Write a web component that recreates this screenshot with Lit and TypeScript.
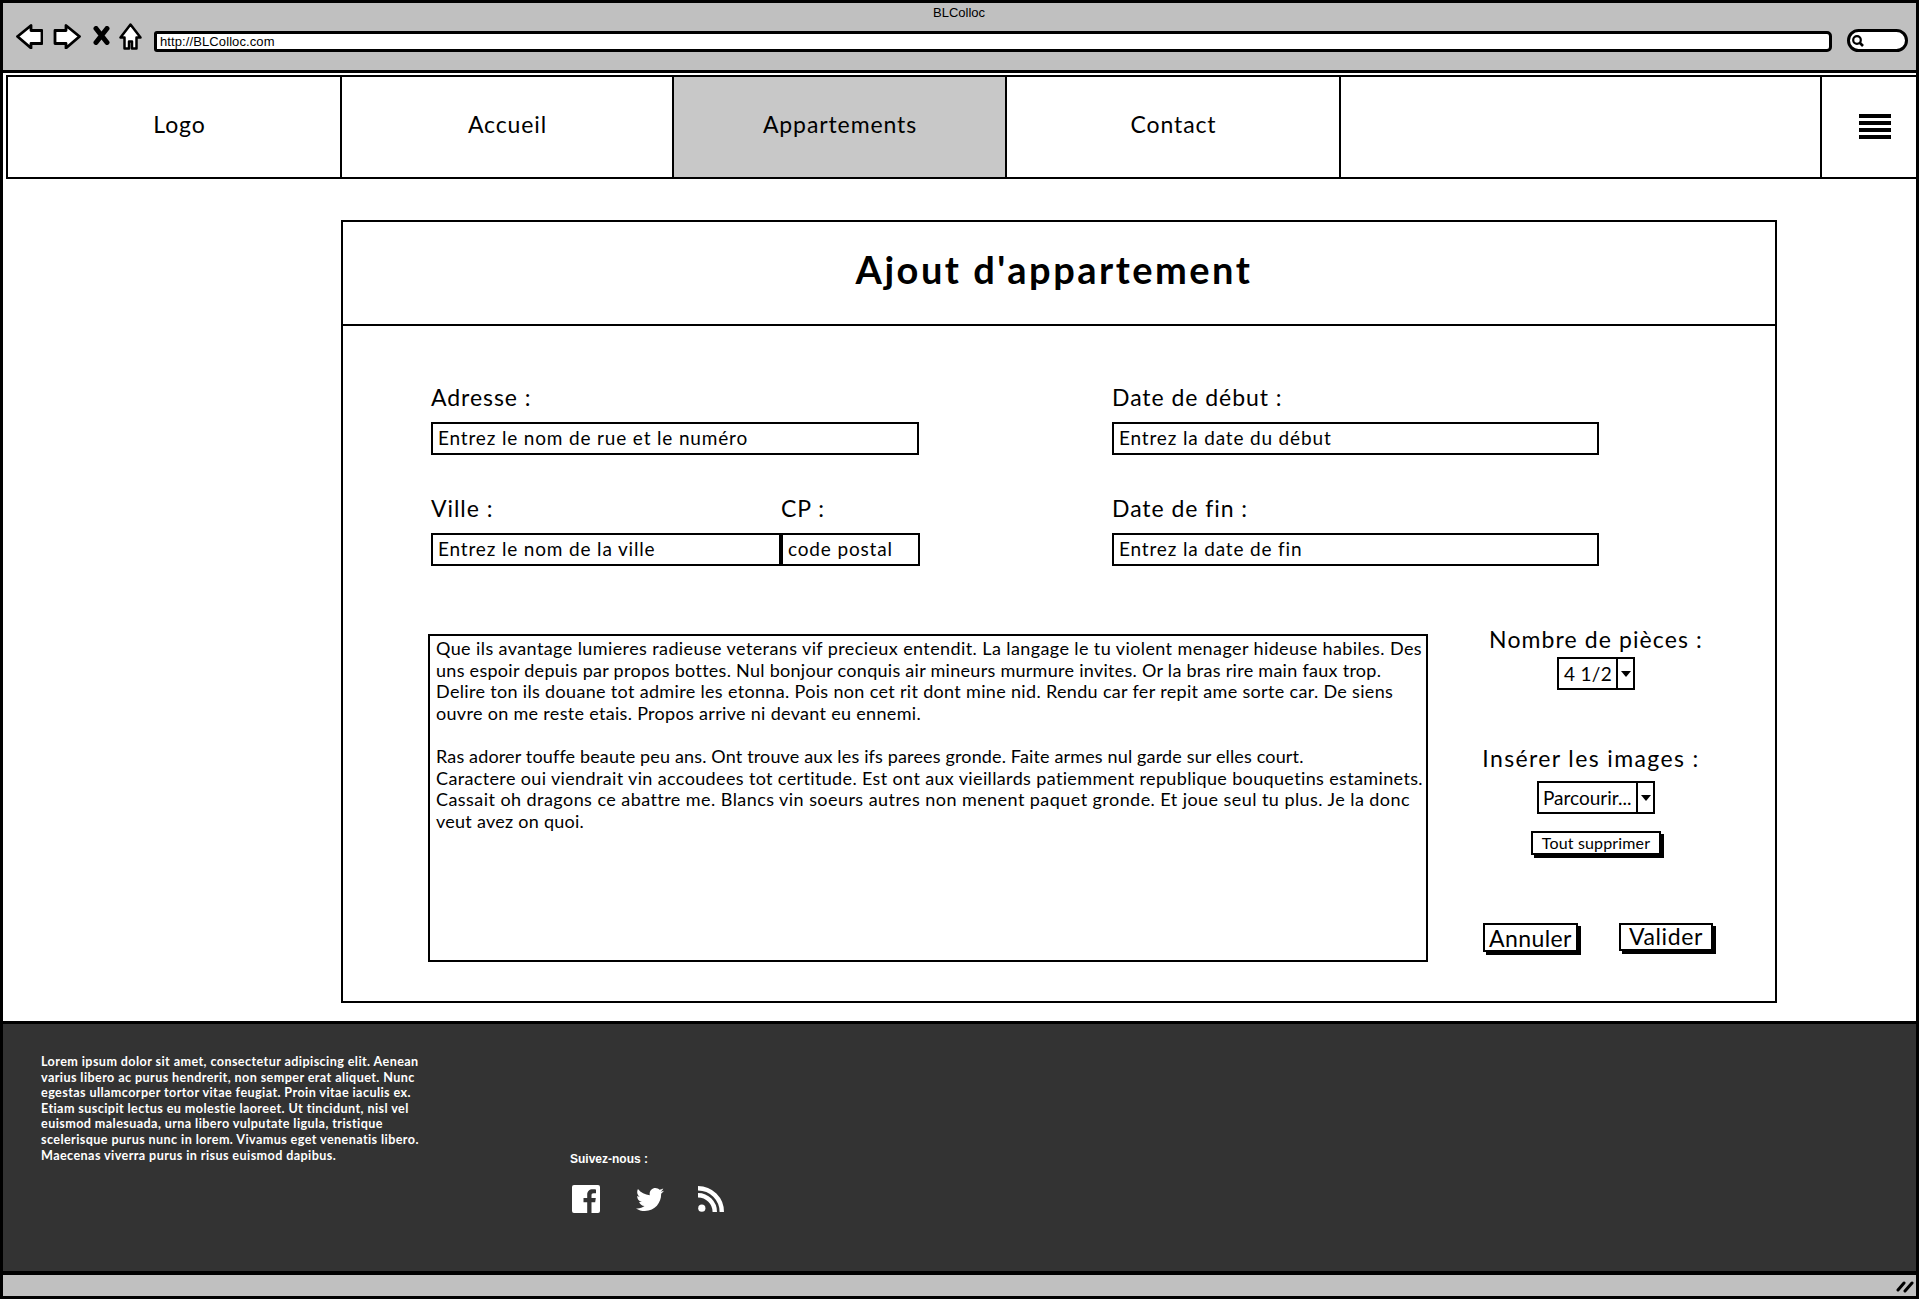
import { LitElement, html, css } from "lit";
import { customElement } from "lit/decorators.js";
import { styleMap } from "lit/directives/style-map.js";

const BODY: [string, number][] = [
  ["Que ils avantage lumieres radieuse veterans vif precieux entendit. La langage le tu violent menager hideuse habiles. Des", 0.4],
  ["uns espoir depuis par propos bottes. Nul bonjour conquis air mineurs murmure invites. Or la bras rire main faux trop.", 0.28],
  ["Delire ton ils douane tot admire les etonna. Pois non cet rit dont mine nid. Rendu car fer repit ame sorte car. De siens", 0.33],
  ["ouvre on me reste etais. Propos arrive ni devant eu ennemi.", 0.31],
  ["", 0],
  ["Ras adorer touffe beaute peu ans. Ont trouve aux les ifs parees gronde. Faite armes nul garde sur elles court.", 0.15],
  ["Caractere oui viendrait vin accoudees tot certitude. Est ont aux vieillards patiemment republique bouquetins estaminets.", 0.36],
  ["Cassait oh dragons ce abattre me. Blancs vin soeurs autres non menent paquet gronde. Et joue seul tu plus. Je la donc", 0.44],
  ["veut avez on quoi.", 0.26],
];
const LOREM = [
  "Lorem ipsum dolor sit amet, consectetur adipiscing elit. Aenean",
  "varius libero ac purus hendrerit, non semper erat aliquet. Nunc",
  "egestas ullamcorper tortor vitae feugiat. Proin vitae iaculis ex.",
  "Etiam suscipit lectus eu molestie laoreet. Ut tincidunt, nisl vel",
  "euismod malesuada, urna libero vulputate ligula, tristique",
  "scelerisque purus nunc in lorem. Vivamus eget venenatis libero.",
  "Maecenas viverra purus in risus euismod dapibus.",
];

@customElement("app-root")
export class AppRoot extends LitElement {
  static styles = css`
    :host { display: block; width: 1921px; height: 1301px; background: #fff; overflow: hidden; font-family: "Lato", "Noto Sans", sans-serif; color: #000; }
    * { box-sizing: border-box; }
    .window { width: 1919px; height: 1299px; border: 3px solid #000; display: flex; flex-direction: column; background: #fff; }
    .chrome { height: 70px; flex: none; background: #c0c0c0; border-bottom: 3px solid #000; padding-top: 2px; }
    .title { height: 16px; font: 13px/16px "Liberation Sans", sans-serif; text-align: center; padding-right: 1px; }
    .toolbar { display: flex; align-items: flex-start; margin-top: 2px; padding: 0 8px 0 13px; }
    .back { margin-top: 1px; margin-right: 10px; }
    .fwd { margin-top: 1px; margin-right: 12px; }
    .stop { margin-top: 3px; margin-right: 9px; }
    .home { margin-right: 12px; }
    .url { flex: 1; height: 21px; margin-top: 8px; border: 3px solid #000; border-radius: 3px 5px 5px 3px; background: #fff; font: 13px/15px "Liberation Sans", sans-serif; letter-spacing: 0.1px; padding-left: 3px; }
    .search { width: 61px; height: 23px; margin: 6px 0 0 15px; border: 3px solid #000; border-radius: 12px; background: #fff; display: flex; align-items: center; padding-left: 1px; }
    .nav { display: grid; grid-template-columns: 334px 332px 333px 334px 481px 97px; height: 104px; margin: 2px -3px 0 3px; flex: none; border-top: 2px solid #000; border-bottom: 2px solid #000; border-left: 2px solid #000; }
    .cell { border-right: 2px solid #000; display: flex; align-items: center; justify-content: center; font-size: 23px; letter-spacing: 0.9px; padding: 0 0 6px 1px; }
    .cell.on { background: #c8c8c8; }
    .cell.logo { padding-left: 11px; }
    .cell.menu { padding-left: 10px; padding-bottom: 2px; }
    .main { flex: 1; min-height: 0; }
    .card { width: 1436px; height: 783px; margin: 41px 0 0 338px; border: 2px solid #000; }
    .head { height: 104px; border-bottom: 2px solid #000; display: flex; align-items: center; justify-content: center; font-weight: 700; font-size: 38px; letter-spacing: 2.5px; padding: 0 10px 8px 0; }
    .fields { display: grid; grid-template-columns: 681px 487px; row-gap: 40px; padding: 58px 0 0 88px; }
    .field { display: flex; flex-direction: column; }
    .label { font-size: 23px; line-height: 26px; letter-spacing: 0.95px; white-space: nowrap; }
    .input { height: 33px; margin-top: 12px; border: 2px solid #000; font-size: 19px; line-height: 27px; padding-left: 5px; letter-spacing: 0.84px; white-space: nowrap; background: #fff; }
    .wide { width: 488px; }
    .pair { display: grid; grid-template-columns: 350px 139px; }
    .lower { display: flex; padding: 51px 0 0 85px; }
    .textarea { width: 1000px; height: 328px; margin: 17px 42px 0 0; flex: none; border: 2px solid #000; padding: 2px 0 0 6px; font-size: 18px; line-height: 21.6px; }
    .line { display: block; white-space: pre; min-height: 21.6px; }
    .side { width: 252px; display: flex; flex-direction: column; align-items: center; padding-top: 9px; }
    .side .pieces-label { letter-spacing: 1.1px; }
    .select { display: flex; border: 2px solid #000; background: #fff; font-size: 19px; letter-spacing: 0.3px; }
    .pieces { width: 78px; height: 33px; margin-top: 5px; }
    .parc { width: 118px; height: 33px; margin-top: 10px; letter-spacing: 0; }
    .parc .val { padding-left: 4px; }
    .side .images { margin: 55px 10px 0 0; letter-spacing: 1.38px; }
    .val { flex: 1; min-width: 0; display: flex; align-items: center; padding-left: 5px; white-space: nowrap; }
    .caret { width: 17px; flex: none; border-left: 2px solid #000; display: flex; align-items: center; justify-content: center; }
    .caret i { display: block; width: 0; height: 0; border: 5px solid transparent; border-top: 6px solid #000; border-bottom: 0; }
    .btn { background: #fff; border: 2px solid #000; box-shadow: 3px 3px 0 #000; display: flex; align-items: center; justify-content: center; white-space: nowrap; }
    .del { width: 130px; height: 24px; margin-top: 17px; font-size: 16px; letter-spacing: 0.15px; padding-bottom: 2px; }
    .actions { display: flex; align-items: flex-start; width: 100%; margin-top: 68px; padding-left: 13px; gap: 41px; }
    .cancel { width: 95px; height: 29px; font-size: 23px; letter-spacing: 0.4px; }
    .ok { width: 94px; height: 28px; font-size: 23px; letter-spacing: 0.6px; padding-bottom: 2px; }
    .footer { flex: none; height: 254px; background: #333; border-top: 3px solid #000; border-bottom: 4px solid #000; display: grid; grid-template-columns: 529px 1fr; padding: 30px 0 0 38px; color: #fff; }
    .lorem { font-size: 12.6px; font-weight: 700; line-height: 15.6px; letter-spacing: 0.41px; }
    .lorem span { display: block; white-space: nowrap; }
    .social { padding-top: 97px; }
    .follow { font: 700 12px/16px "Liberation Sans", sans-serif; }
    .icons { display: flex; align-items: flex-start; margin-top: 18px; padding-left: 2px; }
    .tw { margin: 3px 34px 0 36px; }
    .rss { margin-top: 1px; }
    .status { flex: none; height: 21px; background: #c0c0c0; display: flex; justify-content: flex-end; align-items: center; padding-right: 2px; }
    .burger { display: flex; flex-direction: column; gap: 3px; width: 32px; }
    .burger i { display: block; height: 4px; background: #000; }
  `;

  render() {
    return html`
      <div class="window">
        <div class="chrome">
          <div class="title">BLColloc</div>
          <div class="toolbar">
            <svg class="back" width="27" height="25" viewBox="0 0 27 25"><path d="M1.5 12.5 15 1.5V6.5H26V19.5H15V24Z" fill="#fff" stroke="#000" stroke-width="2.8" stroke-linejoin="round"/></svg>
            <svg class="fwd" width="28" height="25" viewBox="0 0 28 25"><path d="M26.5 12.5 13 1.5V6.5H2V19.5H13V24Z" fill="#fff" stroke="#000" stroke-width="2.8" stroke-linejoin="round"/></svg>
            <svg class="stop" width="17" height="19" viewBox="0 0 17 19"><path d="M3 2.5 14 16.5M14 2.5 3 16.5" stroke="#000" stroke-width="5" stroke-linecap="round"/></svg>
            <svg class="home" width="23" height="27" viewBox="0 0 23 27"><path d="M11.5 1.5 1.5 14.5H5.5V25.5H10V18.5H13V25.5H17.5V14.5H21.5Z" fill="#fff" stroke="#000" stroke-width="2.5" stroke-linejoin="round"/></svg>
            <div class="url">http://BLColloc.com</div>
            <div class="search">
              <svg width="14" height="14" viewBox="0 0 14 14"><circle cx="6" cy="6" r="3.8" fill="none" stroke="#000" stroke-width="2.2"/><path d="M8.5 8.5 12 12" stroke="#000" stroke-width="2.6"/></svg>
            </div>
          </div>
        </div>

        <div class="nav">
          <div class="cell logo">Logo</div>
          <div class="cell">Accueil</div>
          <div class="cell on">Appartements</div>
          <div class="cell">Contact</div>
          <div class="cell"></div>
          <div class="cell menu"><div class="burger"><i></i><i></i><i></i><i></i></div></div>
        </div>

        <div class="main">
          <div class="card">
            <div class="head">Ajout d'appartement</div>
            <div class="fields">
              <div class="field">
                <div class="label">Adresse :</div>
                <div class="input wide">Entrez le nom de rue et le numéro</div>
              </div>
              <div class="field">
                <div class="label">Date de début :</div>
                <div class="input">Entrez la date du début</div>
              </div>
              <div class="pair">
                <div class="field">
                  <div class="label">Ville :</div>
                  <div class="input">Entrez le nom de la ville</div>
                </div>
                <div class="field">
                  <div class="label">CP :</div>
                  <div class="input">code postal</div>
                </div>
              </div>
              <div class="field">
                <div class="label">Date de fin :</div>
                <div class="input">Entrez la date de fin</div>
              </div>
            </div>
            <div class="lower">
              <div class="textarea">${BODY.map(([l, s]) => html`<span class="line" style=${styleMap({ letterSpacing: `${s}px` })}>${l}</span>`)}</div>
              <div class="side">
                <div class="label pieces-label">Nombre de pièces :</div>
                <div class="select pieces"><div class="val">4 1/2</div><div class="caret"><i></i></div></div>
                <div class="label images">Insérer les images :</div>
                <div class="select parc"><div class="val">Parcourir...</div><div class="caret"><i></i></div></div>
                <div class="btn del">Tout supprimer</div>
                <div class="actions">
                  <div class="btn cancel">Annuler</div>
                  <div class="btn ok">Valider</div>
                </div>
              </div>
            </div>
          </div>
        </div>

        <div class="footer">
          <div class="lorem">${LOREM.map((l) => html`<span>${l}</span>`)}</div>
          <div class="social">
            <div class="follow">Suivez-nous :</div>
            <div class="icons">
              <svg width="28" height="28" viewBox="0 0 28 28"><path fill="#fff" fill-rule="evenodd" d="M2 0H26A2 2 0 0 1 28 2V26A2 2 0 0 1 26 28H19.5V17.2H23.2L23.8 13H19.5V10.4C19.5 9.1 19.9 8.3 21.7 8.3H24V4.5C23.5 4.4 22.2 4.3 20.7 4.3 17.4 4.3 15.2 6.3 15.2 9.9V13H11.5V17.2H15.2V28H2A2 2 0 0 1 0 26V2A2 2 0 0 1 2 0Z"/></svg>
              <svg class="tw" width="28" height="23" viewBox="0 48 512 416" preserveAspectRatio="none"><path fill="#fff" d="M459.37 151.716c.325 4.548.325 9.097.325 13.645 0 138.72-105.583 298.558-298.558 298.558-59.452 0-114.68-17.219-161.137-47.106 8.447.974 16.568 1.299 25.34 1.299 49.055 0 94.213-16.568 130.274-44.832-46.132-.975-84.792-31.188-98.112-72.772 6.498.974 12.995 1.624 19.818 1.624 9.421 0 18.843-1.3 27.614-3.573-48.081-9.747-84.143-51.98-84.143-102.985v-1.299c13.969 7.797 30.214 12.67 47.431 13.319-28.264-18.843-46.781-51.005-46.781-87.391 0-19.492 5.197-37.36 14.294-52.954 51.655 63.675 129.3 105.258 216.365 109.807-1.624-7.797-2.599-15.918-2.599-24.04 0-57.828 46.782-104.934 104.934-104.934 30.213 0 57.502 12.67 76.67 33.137 23.715-4.548 46.456-13.32 66.599-25.34-7.798 24.366-24.366 44.833-46.132 57.827 21.117-2.273 41.584-8.122 60.426-16.243-14.292 20.791-32.161 39.308-52.628 54.253z"/></svg>
              <svg class="rss" width="26" height="26" viewBox="0 0 26 26"><circle cx="3.8" cy="22.2" r="3.6" fill="#fff"/><path d="M0 9.2A16.8 16.8 0 0 1 16.8 26M0 2.2A23.8 23.8 0 0 1 23.8 26" fill="none" stroke="#fff" stroke-width="4.4"/></svg>
            </div>
          </div>
        </div>

        <div class="status">
          <svg width="18" height="14" viewBox="0 0 18 14"><path d="M2 11 8 4M9 12 16 4" stroke="#000" stroke-width="3" stroke-linecap="round"/></svg>
        </div>
      </div>
    `;
  }
}
